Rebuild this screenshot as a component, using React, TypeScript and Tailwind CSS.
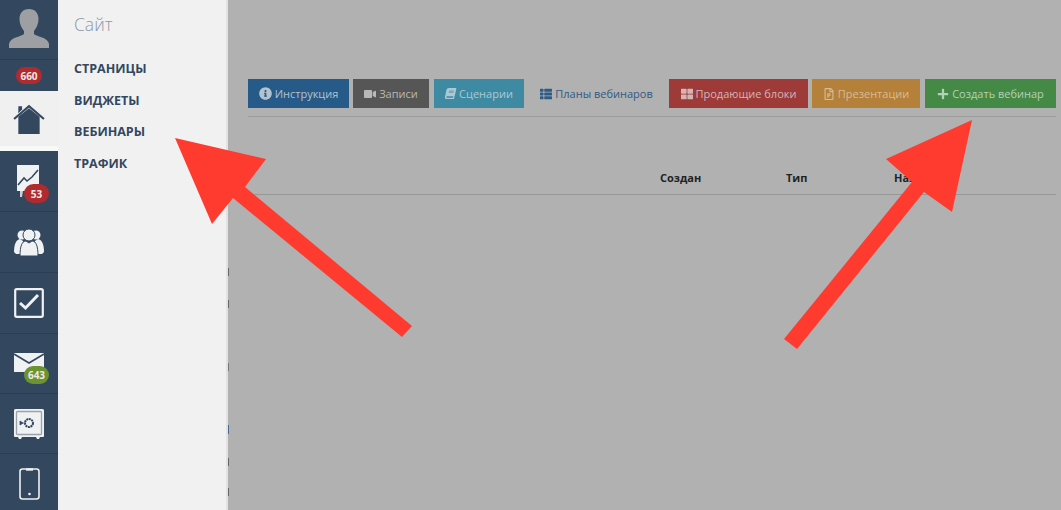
import { ReactNode } from 'react';
import { FaBook, FaInfoCircle, FaPlus, FaRegFilePowerpoint, FaThLarge, FaThList, FaVideo } from 'react-icons/fa';

const buttons = [
  { label: 'Инструкция', icon: <FaInfoCircle size={13} />, cls: 'w-[101px] bg-[#265a88] text-[#b3c2cf]' },
  { label: 'Записи', icon: <FaVideo size={12} />, cls: 'w-[76px] ml-[4px] bg-[#565656] text-[#b8b8b8]' },
  { label: 'Сценарии', icon: <FaBook size={11} className="-skew-x-12" />, cls: 'w-[90px] ml-[5px] bg-[#3f8aa3] text-[#abc9d4]' },
  { label: 'Планы вебинаров', icon: <FaThList size={12} />, cls: 'w-[113px] ml-[16px] text-[#2f5a85]' },
  { label: 'Продающие блоки', icon: <FaThLarge size={12} />, cls: 'w-[139px] ml-[16px] bg-[#9e3a38] text-[#d2b6b5]' },
  { label: 'Презентации', icon: <FaRegFilePowerpoint size={12} />, cls: 'w-[108px] ml-[4px] bg-[#b4803a] text-[#d4bc97]' },
  { label: 'Создать вебинар', icon: <FaPlus size={12} />, cls: 'w-[131px] ml-[5px] bg-[#448a46] text-[#b5d0b6]' },
];

const menu = ['Страницы', 'Виджеты', 'Вебинары', 'Трафик'];

// leftovers of the blurred-out table along the panel edge
const specks = [
  { cls: 'left-[228px] top-[268px] h-[8px] bg-[#666]' },
  { cls: 'left-[228px] top-[300px] h-[8px] bg-[#666]' },
  { cls: 'left-[228px] top-[363px] h-[8px] bg-[#777]' },
  { cls: 'left-[228px] top-[425px] h-[9px] bg-[#4a6a95]' },
  { cls: 'left-[228px] top-[458px] h-[8px] bg-[#666]' },
  { cls: 'left-[228px] top-[488px] h-[8px] bg-[#666]' },
];

function Badge({ children, cls }: { children: ReactNode; cls: string }) {
  return (
    <span className={`flex items-center justify-center rounded-[9px] font-bold text-[10px] leading-none text-[#f1e9e4] ${cls}`}>
      {children}
    </span>
  );
}

function NavCell({ children, cls }: { children: ReactNode; cls: string }) {
  return <div className={`relative flex shrink-0 items-center justify-center border-b border-[#2b3d52] ${cls}`}>{children}</div>;
}

export default function App() {
  return (
    <div className="relative flex h-[510px] w-[1061px] overflow-hidden bg-[#b1b1b1] font-['Open_Sans',sans-serif]">
      <nav className="flex w-[58px] shrink-0 flex-col bg-[#33475f]">
        <div className="flex h-[60px] shrink-0 items-start justify-center border-b border-[#2b3d52] pt-[9px]">
          <svg width="40" height="39" viewBox="0 0 40 39" fill="#9d9fa3">
            <path d="M20 0c6 0 9.500 4 9.500 10 0 5-2 9-4.500 12v3c3 3 14 3 15 10v4H0v-4c1-7 12-7 15-10v-3c-2.500-3-4.500-7-4.500-12C10.500 4 14 0 20 0z" />
          </svg>
        </div>
        <div className="flex h-[31px] shrink-0 items-start justify-center pt-[7px]">
          <Badge cls="h-[17px] w-[26px] bg-[#b02a2e]">660</Badge>
        </div>
        <div className="flex h-[55px] shrink-0 items-center justify-center bg-[#f0f0f0]">
          <svg width="32" height="30" viewBox="0 0 30 28" fill="#33475f">
            <path d="M5 12 15 4l10 8v16H5z" />
            <path d="M1 14 15 2l14 12" fill="none" stroke="#33475f" strokeWidth="2" />
            <path d="M5 2h3.500v3L5 8.500z" />
          </svg>
        </div>
        <div className="h-[5px] shrink-0 bg-[#f7f8f8]" />
        <NavCell cls="h-[61px]">
          <svg className="mr-[3px]" width="22" height="32" viewBox="0 0 22 32">
            <path d="M0 0h22v26H0z" fill="#eff1f2" />
            <path d="M1 20l6-7 3 3 5-4 6-7" fill="none" stroke="#33475f" strokeWidth="1.600" />
            <path d="M3 26h3l-1 6H3z" fill="#c9d0d6" />
          </svg>
          <Badge cls="absolute left-[24px] top-[33px] h-[19px] w-[25px] rounded-[10px] bg-[#b02a2e]">53</Badge>
        </NavCell>
        <NavCell cls="h-[61px]">
          <svg width="32" height="30" viewBox="0 0 32 28" fill="#eff1f2">
            <circle cx="9" cy="7" r="4.500" />
            <circle cx="23" cy="7" r="4.500" />
            <path d="M1 24c0-8 2-12 6-13l3 2v13H3z" />
            <path d="M31 24c0-8-2-12-6-13l-3 2v13h7z" />
            <circle cx="16" cy="7" r="6" stroke="#33475f" />
            <path d="M7 28c0-10 2-15 6-15l3 2 3-2c4 0 6 5 6 15z" stroke="#33475f" />
          </svg>
        </NavCell>
        <NavCell cls="h-[61px]">
          <svg width="30" height="30" viewBox="0 0 30 30" fill="none">
            <rect x="1.200" y="1.200" width="27.600" height="27.600" rx="1.500" stroke="#eff1f2" strokeWidth="2.200" />
            <path d="M6 15l5.500 5L24 7" stroke="#eff1f2" strokeWidth="3" />
          </svg>
        </NavCell>
        <NavCell cls="h-[60px]">
          <svg className="mb-[2px] mr-[1px]" width="30" height="19" viewBox="0 0 30 19">
            <path d="M0 0h30v19H0z" fill="#eff1f2" />
            <path d="M0 1l15 9 15-9" fill="none" stroke="#33475f" strokeWidth="1.600" />
          </svg>
          <Badge cls="absolute left-[24px] top-[32px] h-[18px] w-[25px] rounded-[8px] bg-[#6b9330]">643</Badge>
        </NavCell>
        <NavCell cls="h-[60px]">
          <svg width="30" height="30" viewBox="0 0 30 30">
            <path d="M0 1.500A1.500 1.500 0 0 1 1.500 0h27A1.500 1.500 0 0 1 30 1.500V27a1 1 0 0 1-1 1h-3l-1 2h-2l-1-2H8l-1 2H5l-1-2H1a1 1 0 0 1-1-1z" fill="#eff1f2" />
            <rect x="2.500" y="2.500" width="25" height="23" rx="1" fill="none" stroke="#9aa3ad" strokeWidth="1.300" />
            <circle cx="15" cy="14" r="4" fill="none" stroke="#33475f" strokeWidth="2" strokeDasharray="2 0.600" />
            <path d="M6 12l3 2-3 2zM9 14h3" fill="#33475f" stroke="#33475f" strokeWidth="0.800" />
          </svg>
        </NavCell>
        <div className="flex flex-1 items-start justify-center pt-[14px]">
          <svg width="21" height="32" viewBox="0 0 21 32" fill="none">
            <rect x="1" y="1" width="19" height="30" rx="2.500" stroke="#eff1f2" strokeWidth="1.600" />
            <path d="M7 1.500h7" stroke="#eff1f2" strokeWidth="2.400" />
            <circle cx="10.500" cy="26" r="1.300" fill="#eff1f2" />
          </svg>
        </div>
      </nav>

      <aside className="w-[170px] shrink-0 border-r-2 border-[#e2e2e2] bg-[#f1f1f2] pl-[16px]">
        <h2 className="pt-[13px] text-[17.500px] font-light leading-[22px] text-[#8b97a4]">Сайт</h2>
        <ul className="mt-[18px] flex flex-col">
          {menu.map((item) => (
            <li key={item} className="h-[31.600px] text-[12.500px] font-bold uppercase leading-[31px] text-[#34475e]">
              {item}
            </li>
          ))}
        </ul>
      </aside>

      <main className="min-w-0 flex-1 pl-[20px] pr-[5px] pt-[79px]">
        <div className="flex h-[38px] items-start border-b border-[#9c9c9c]">
          {buttons.map((b) => (
            <button
              key={b.label}
              className={`flex h-[29px] shrink-0 items-center justify-center gap-[3px] whitespace-nowrap text-[11px] leading-none ${b.cls}`}
            >
              {b.icon}
              {b.label}
            </button>
          ))}
        </div>
        <div className="flex h-[78px] items-end border-b border-[#979797] pb-[8px] pl-[412px] text-[11px] font-bold leading-[16px] text-[#222]">
          <span className="w-[126px]">Создан</span>
          <span className="w-[108px]">Тип</span>
          <span>Название</span>
        </div>
      </main>

      {specks.map((s) => (
        <div key={s.cls} className={`absolute w-px ${s.cls}`} />
      ))}

      <svg className="pointer-events-none absolute inset-0" width="1061" height="510" fill="#ff3b30">
        <polygon points="175,138 266,159 245,187 412,326 402,337 233,198 212,224" />
        <polygon points="972,120 886,159 912,182 784,339 797,349 924,192 952,212" />
      </svg>
    </div>
  );
}
